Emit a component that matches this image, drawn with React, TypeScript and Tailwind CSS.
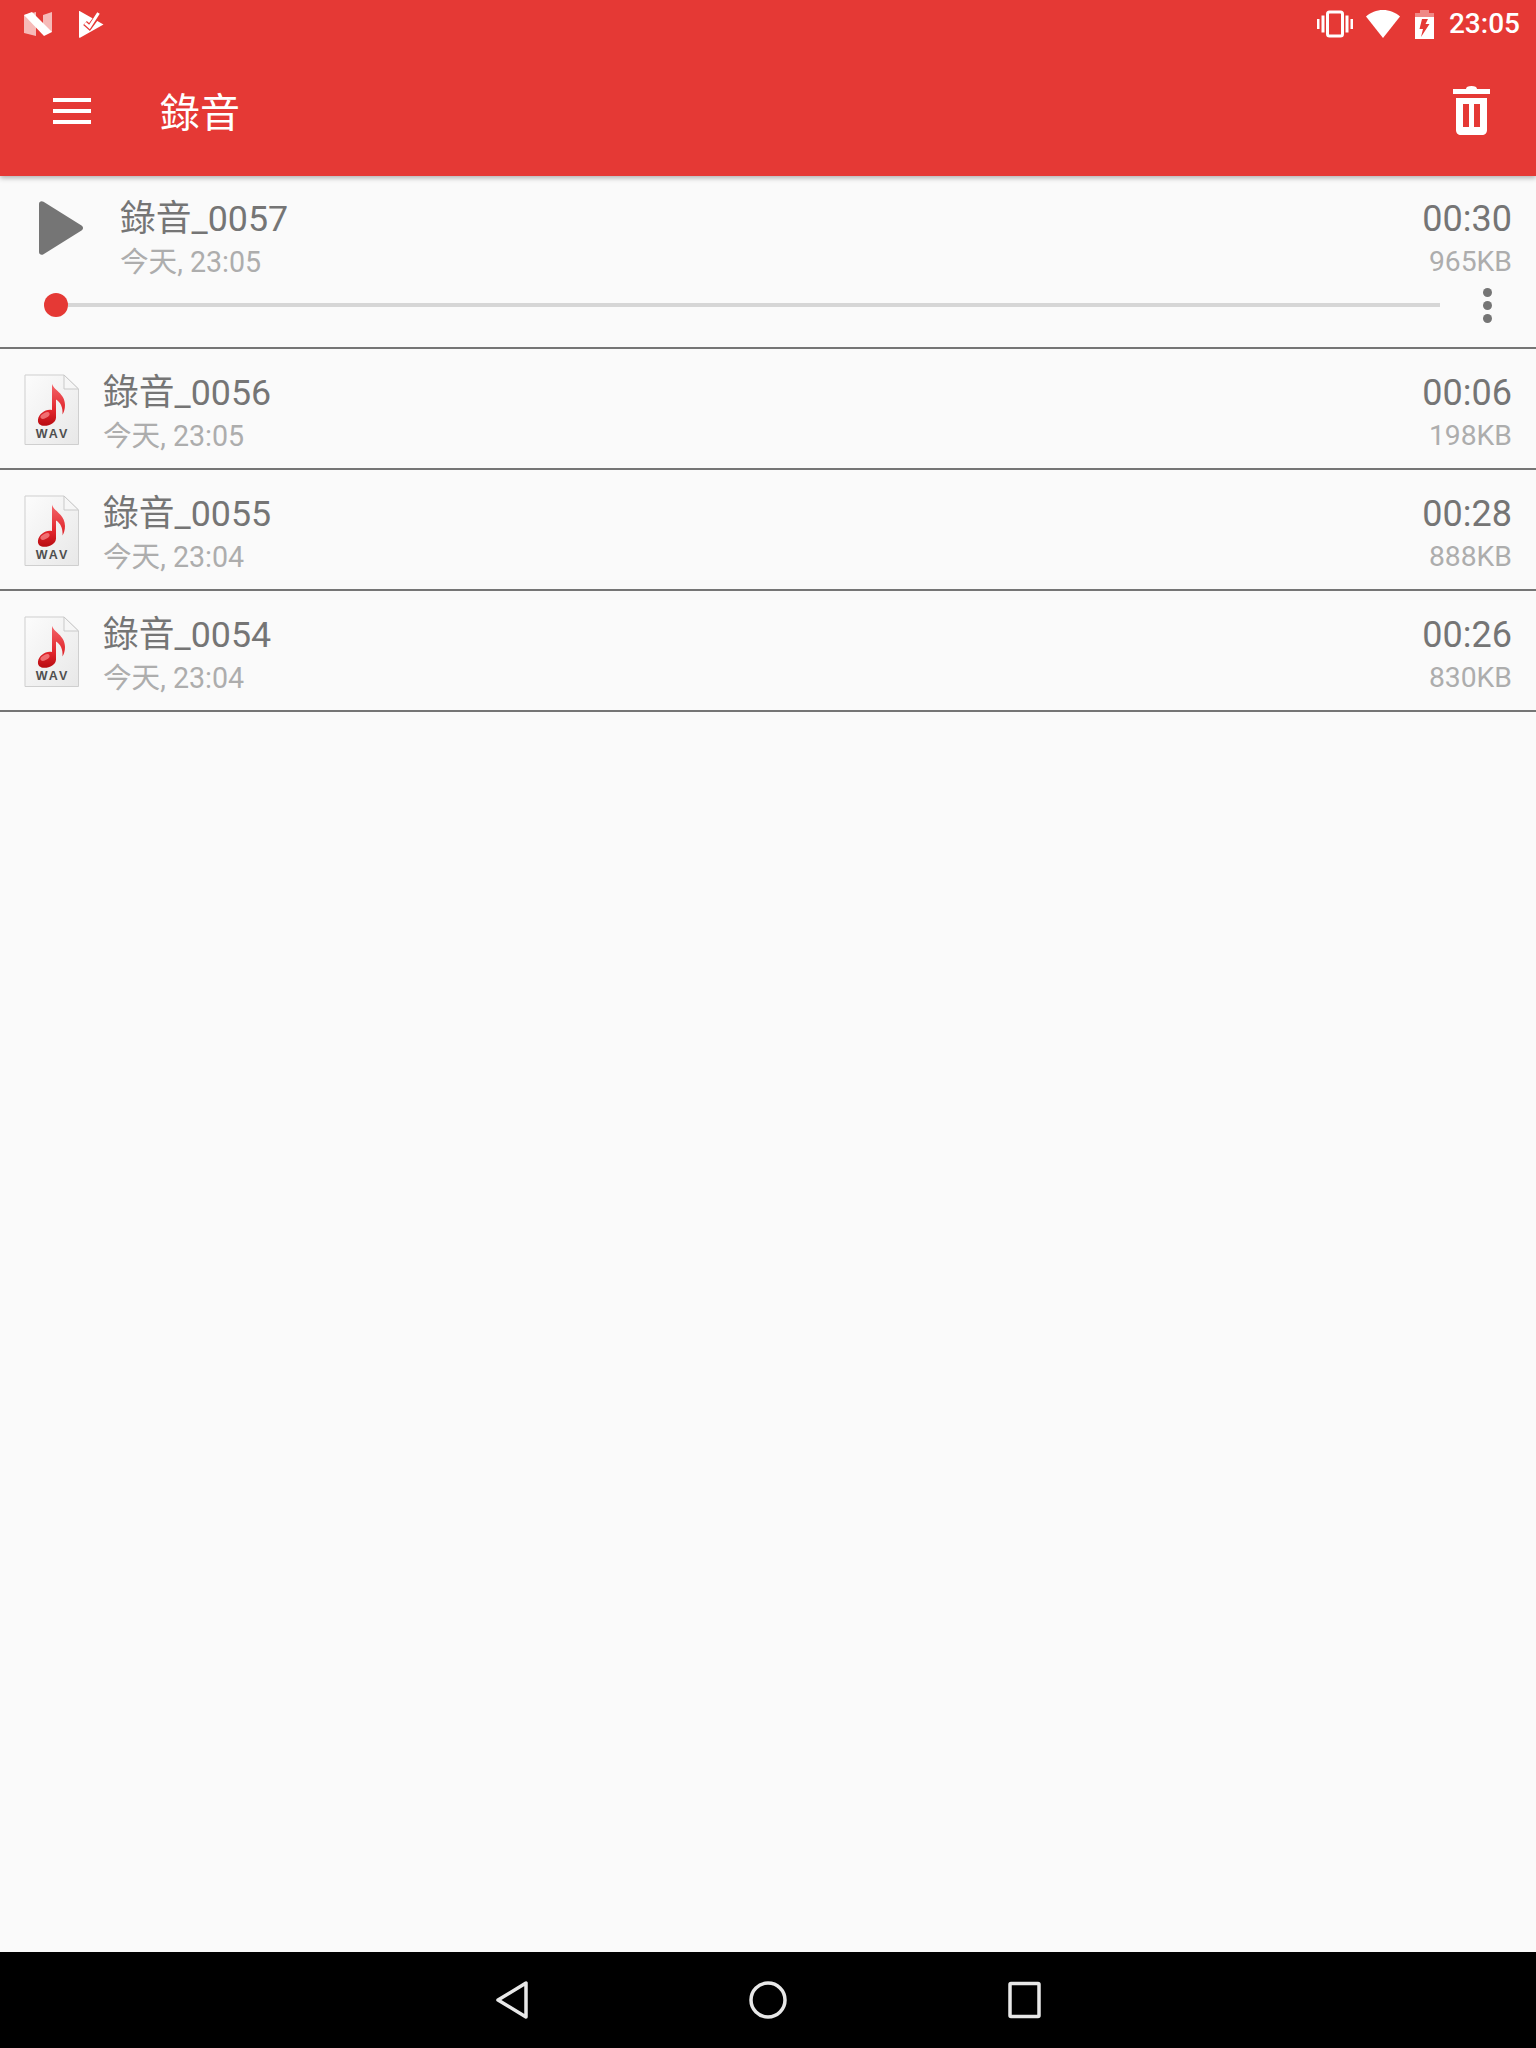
const recordings = [
  { name: "錄音_0056", date: "今天, 23:05", time: "00:06", size: "198KB" },
  { name: "錄音_0055", date: "今天, 23:04", time: "00:28", size: "888KB" },
  { name: "錄音_0054", date: "今天, 23:04", time: "00:26", size: "830KB" },
];

const WavIcon = ({ id }: { id: string }) => (
  <svg width="58" height="74" viewBox="0 0 58 74" className="shrink-0">
    <defs>
      <linearGradient id={`page-${id}`} x1="0" y1="0" x2="1" y2="1">
        <stop offset="0" stopColor="#fcfcfc" />
        <stop offset="1" stopColor="#e8e8e8" />
      </linearGradient>
      <linearGradient id={`note-${id}`} x1="0" y1="0" x2="0" y2="1">
        <stop offset="0" stopColor="#f4666b" />
        <stop offset="0.65" stopColor="#e0252b" />
        <stop offset="1" stopColor="#b80c12" />
      </linearGradient>
    </defs>
    <path d="M2 3H41L55.5 17V72.5H2Z" fill={`url(#page-${id})`} stroke="#cfcfcf" strokeWidth="1" />
    <path d="M41 3V17H55.5Z" fill="#f6f6f6" stroke="#c9c9c9" strokeWidth="1" />
    <path
      d="M29 11.5C30 18 42 21 42 33C42 37 41 40 39.5 42.5C40 36 38 30.5 33 27.5V45.5C33 50.5 27 53.8 21.5 53.8C17 53.8 14.5 51.5 15 47.5C15.8 41.5 23 36.5 29 38Z"
      fill={`url(#note-${id})`}
    />
    <ellipse cx="22" cy="43.5" rx="5" ry="2.5" transform="rotate(-28 22 43.5)" fill="#ff9a9a" fillOpacity="0.65" />
    <text
      x="29.5"
      y="65.5"
      textAnchor="middle"
      fontSize="12.5"
      fontWeight="700"
      letterSpacing="2"
      fill="#4f4f4f"
      fontFamily="'Liberation Sans', Arial, sans-serif"
    >
      WAV
    </text>
  </svg>
);

const Meta = ({ time, size }: { time: string; size: string }) => (
  <div className="flex flex-col items-end">
    <span className="h-[44px] text-[36px] leading-[43px] text-[#757575]">{time}</span>
    <span className="mt-[2px] h-[36px] text-[28.3px] leading-[36px] text-[#adadad]">{size}</span>
  </div>
);

const Labels = ({ name, date }: { name: string; date: string }) => (
  <div className="flex flex-col">
    <span className="h-[44px] text-[35.8px] leading-[43px] text-[#757575]">{name}</span>
    <span className="mt-[2px] h-[36px] text-[28.6px] leading-[36px] text-[#adadad]">{date}</span>
  </div>
);

export default function App() {
  return (
    <div
      className="flex h-[2048px] w-[1536px] flex-col bg-[#fafafa]"
      style={{ fontFamily: "Roboto, 'Noto Sans CJK TC', sans-serif" }}
    >
      <header className="relative z-10 h-[176px] shrink-0 bg-[#e53935] shadow-[0_2px_5px_rgba(0,0,0,0.3)]">
        <div className="flex h-[48px] items-center pl-[24px] pr-[16px]">
          <svg width="28" height="24" viewBox="0 0 28 24" className="mr-[27px]">
            <path d="M0 3L12 0V24L0 21Z" fill="#fff" fillOpacity="0.65" />
            <path d="M19 3L28 0V20L19 20Z" fill="#fff" fillOpacity="0.65" />
            <path d="M0 3L8 0L28 20L20 24Z" fill="#fff" />
          </svg>
          <svg width="25" height="27" viewBox="0 0 25 27">
            <path d="M0 0.5C0 0 0.5 0 1 0.3L24.5 13.5L1 26.8C0.5 27 0 26.8 0 26Z" fill="#fff" />
            <path d="M6 12L10.5 16L20 3" fill="none" stroke="#e53935" strokeWidth="5.5" />
            <path d="M6 12L10.5 16L19.5 2" fill="none" stroke="#fff" strokeWidth="3" />
          </svg>
          <div className="ml-auto flex items-center">
            <svg width="36" height="28" viewBox="0 0 36 28" className="mr-[13px]">
              <rect x="10.5" y="2" width="15" height="24" rx="2" fill="none" stroke="#fff" strokeWidth="3" />
              <rect x="0" y="9" width="2.5" height="10" fill="#fff" />
              <rect x="4.5" y="5.5" width="3" height="17" fill="#fff" />
              <rect x="28.5" y="5.5" width="3" height="17" fill="#fff" />
              <rect x="33.5" y="9" width="2.5" height="10" fill="#fff" />
            </svg>
            <svg width="34" height="28" viewBox="0 0 34 28" className="mr-[15px]">
              <path d="M0 6.5C4.5 2.5 10.5 0 17 0C23.5 0 29.5 2.5 34 6.5L17 28Z" fill="#fff" />
            </svg>
            <svg width="19" height="29" viewBox="0 0 19 29" className="mr-[15px]">
              <path d="M5 0H14V3H19V7H0V3H5Z" fill="#fff" fillOpacity="0.4" />
              <path fillRule="evenodd" d="M0 7H19V29H0ZM7 9L4.5 19H8L6 27L14.5 14H10.5L13 9Z" fill="#fff" />
            </svg>
            <span className="text-[28px] leading-[34px] font-medium text-white">23:05</span>
          </div>
        </div>
        <div className="flex h-[128px] items-center pb-[4px]">
          <div className="ml-[53px] mt-[2px] flex w-[38px] flex-col gap-[7px]">
            <span className="h-[4px] bg-white" />
            <span className="h-[4px] bg-white" />
            <span className="h-[4px] bg-white" />
          </div>
          <h1 className="ml-[69px] mt-[7px] text-[40px] leading-[48px] font-normal text-white">錄音</h1>
          <svg width="37" height="49" viewBox="0 0 37 49" className="ml-auto mr-[46px]">
            <path d="M13 3C13 1 15 0 18.5 0C22 0 24 1 24 3H37V8H0V3Z" fill="#fff" />
            <path
              fillRule="evenodd"
              d="M3 12H34V44C34 47 32 49 29 49H8C5 49 3 47 3 44ZM10 18V41H16V18ZM21 18V41H27V18Z"
              fill="#fff"
            />
          </svg>
        </div>
      </header>

      <main className="flex-1">
        <section className="h-[173px] border-b-2 border-[#757575]">
          <div className="flex h-[113px] items-start pr-[24px] pl-[39px] pt-[22px]">
            <svg width="44" height="54" viewBox="0 0 44 54" className="mr-[37px] mt-[3px] shrink-0">
              <path d="M0 3C0 0.5 2.5 -0.5 4.5 0.8L42.5 24.5C44.5 25.8 44.5 28.2 42.5 29.5L4.5 53.2C2.5 54.5 0 53.5 0 51Z" fill="#757575" />
            </svg>
            <div className="flex-1">
              <Labels name="錄音_0057" date="今天, 23:05" />
            </div>
            <Meta time="00:30" size="965KB" />
          </div>
          <div className="flex h-[32px] items-center pl-[44px]">
            <span className="h-[24px] w-[24px] shrink-0 rounded-full bg-[#e53935]" />
            <div className="h-[4px] w-[1372px] bg-[#d6d6d6]" />
            <div className="ml-[43px] flex flex-col gap-[4px]">
              <span className="h-[9px] w-[9px] rounded-full bg-[#757575]" />
              <span className="h-[9px] w-[9px] rounded-full bg-[#757575]" />
              <span className="h-[9px] w-[9px] rounded-full bg-[#757575]" />
            </div>
          </div>
        </section>

        {recordings.map((r) => (
          <section
            key={r.name}
            className="flex h-[121px] items-center border-b-2 border-[#757575] pr-[24px] pl-[23px]"
          >
            <WavIcon id={r.name} />
            <div className="ml-[22px] mt-[8px] flex-1">
              <Labels name={r.name} date={r.date} />
            </div>
            <div className="mt-[8px]">
              <Meta time={r.time} size={r.size} />
            </div>
          </section>
        ))}
      </main>

      <nav className="flex h-[96px] shrink-0 items-center justify-center gap-[192px] bg-black">
        <svg width="64" height="64" viewBox="0 0 64 64">
          <path d="M18 32L46 15V49Z" fill="none" stroke="#e8e8e8" strokeWidth="3.5" strokeLinejoin="round" />
        </svg>
        <svg width="64" height="64" viewBox="0 0 64 64">
          <circle cx="32" cy="32" r="17" fill="none" stroke="#e8e8e8" strokeWidth="3.5" />
        </svg>
        <svg width="64" height="64" viewBox="0 0 64 64">
          <rect x="18" y="15.5" width="29" height="33" rx="1" fill="none" stroke="#e8e8e8" strokeWidth="3.5" strokeLinejoin="round" />
        </svg>
      </nav>
    </div>
  );
}
